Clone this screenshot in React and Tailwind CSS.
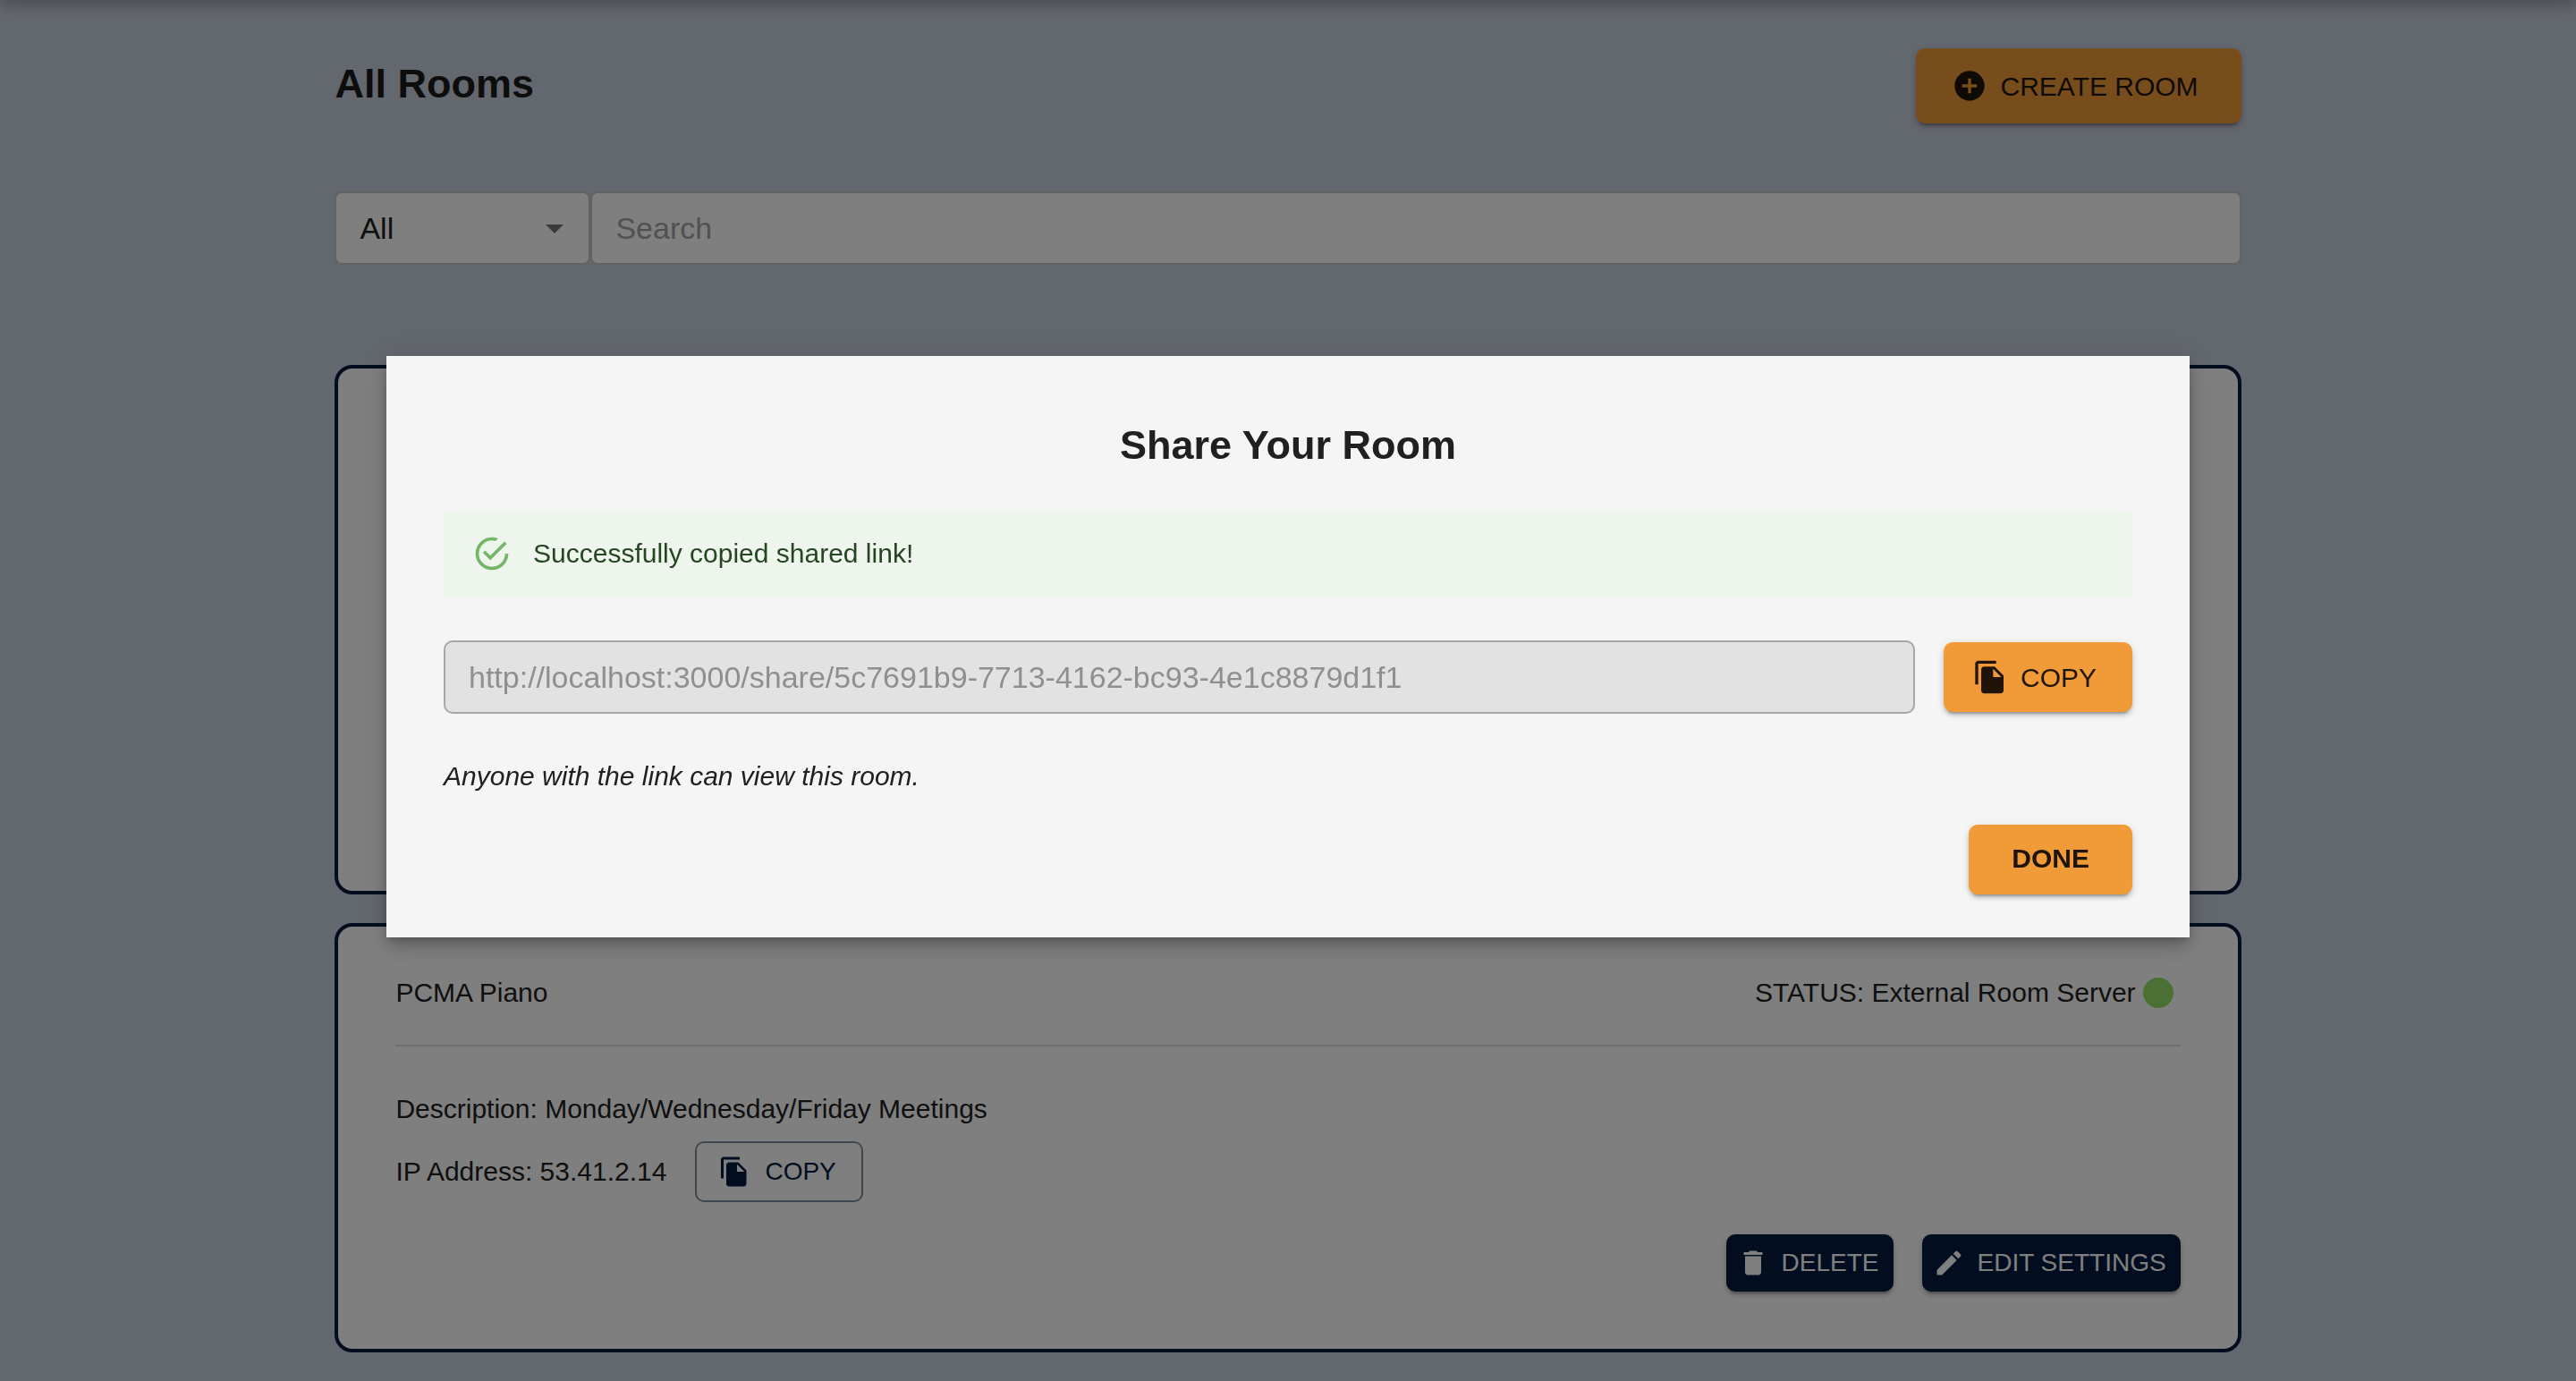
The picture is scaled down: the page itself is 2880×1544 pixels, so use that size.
import {
  MdAddCircle,
  MdArrowDropDown,
  MdDelete,
  MdEdit,
  MdFileCopy,
} from "react-icons/md";

const raised =
  "shadow-[0_6px_2px_-4px_rgba(0,0,0,0.2),0_4px_4px_0_rgba(0,0,0,0.14),0_2px_10px_0_rgba(0,0,0,0.12)]";

function SuccessIcon() {
  return (
    <svg viewBox="0 0 24 24" className="size-11 fill-[#74b568]" aria-hidden="true">
      <path d="M20,12A8,8 0 0,1 12,20A8,8 0 0,1 4,12A8,8 0 0,1 12,4C12.76,4 13.5,4.11 14.2,4.31L15.77,2.74C14.61,2.26 13.34,2 12,2A10,10 0 0,0 2,12A10,10 0 0,0 12,22A10,10 0 0,0 22,12M7.91,10.08L6.5,11.5L11,16L21,6L19.59,4.58L11,13.17L7.91,10.08Z" />
    </svg>
  );
}

function PrimaryButton({ icon: Icon, className = "", children }) {
  return (
    <button
      type="button"
      className={`flex shrink-0 items-center justify-center rounded-[10px] bg-[#f09b38] text-[30px] text-[#1f1407] ${raised} ${className}`}
    >
      {Icon && <Icon className="-ml-2 mr-3.5 size-10" aria-hidden="true" />}
      {children}
    </button>
  );
}

function NavyButton({ icon: Icon, children }) {
  return (
    <button
      type="button"
      className={`flex h-16 items-center rounded-[10px] bg-[#041c40] px-4 text-[28px] text-white ${raised}`}
    >
      <Icon className="-ml-1 mr-3.5 size-9" aria-hidden="true" />
      {children}
    </button>
  );
}

function RoomCard({ className = "", children }) {
  return (
    <article className={`rounded-[20px] border-4 border-[#041c40] bg-white px-16 ${className}`}>
      {children}
    </article>
  );
}

function RoomsPage() {
  return (
    <div className="min-h-screen overflow-hidden bg-[#c7cedd] pb-8">
      <header className="-mt-16 h-16 shadow-[0_8px_10px_0_rgba(0,0,0,0.14),0_2px_20px_0_rgba(0,0,0,0.12)]" />
      <main className="mx-auto w-[74%] pt-[54px]">
        <div className="flex items-center justify-between">
          <h1 className="pb-1 text-[45px] leading-[72px] font-bold text-[#1a1b1d]">All Rooms</h1>
          <PrimaryButton icon={MdAddCircle} className="h-[84px] px-12">
            CREATE ROOM
          </PrimaryButton>
        </div>

        <div className="mt-[76px] flex">
          <div className="relative w-[286px] shrink-0">
            <select
              aria-label="Filter rooms"
              className="h-[82px] w-full appearance-none rounded-lg border-2 border-[#c4c4c4] bg-white px-[26px] text-[34px] text-[#202020]"
            >
              <option>All</option>
            </select>
            <MdArrowDropDown
              className="pointer-events-none absolute inset-y-0 right-4 my-auto size-12 text-[#757575]"
              aria-hidden="true"
            />
          </div>
          <input
            type="text"
            aria-label="Search rooms"
            placeholder="Search"
            className="h-[82px] min-w-0 flex-1 rounded-lg border-2 border-[#c4c4c4] bg-white px-[26px] text-[34px] placeholder:text-[#a3a3a3]"
          />
        </div>

        <div className="mt-28 flex flex-col gap-8 text-[30px] leading-[48px] text-[#202020]">
          <RoomCard className="min-h-[592px]" />
          <RoomCard className="pt-[50px] pb-16">
            <div className="flex items-center justify-between border-b-2 border-[#e0e0e0] pb-[34px]">
              <h2>PCMA Piano</h2>
              <p className="mr-2 flex items-center gap-2">
                STATUS: External Room Server
                <span className="size-[34px] rounded-full bg-[#94e266]" />
              </p>
            </div>
            <p className="mt-[46px]">Description: Monday/Wednesday/Friday Meetings</p>
            <div className="mt-3 flex items-center gap-8">
              <p>IP Address: 53.41.2.14</p>
              <button
                type="button"
                className="flex h-[68px] items-center rounded-[10px] border-2 border-[#818d9f] px-7 text-[28px] text-[#041c40]"
              >
                <MdFileCopy className="-ml-1 mr-4 size-9" aria-hidden="true" />
                COPY
              </button>
            </div>
            <div className="mt-9 flex justify-end gap-8">
              <NavyButton icon={MdDelete}>DELETE</NavyButton>
              <NavyButton icon={MdEdit}>EDIT SETTINGS</NavyButton>
            </div>
          </RoomCard>
        </div>
      </main>
    </div>
  );
}

function ShareDialog() {
  return (
    <div className="fixed inset-0 flex items-center justify-center bg-black/50 pb-[98px]">
      <section
        role="dialog"
        aria-modal="true"
        aria-labelledby="share-title"
        className="w-[70%] bg-[#f5f5f5] px-16 pt-16 pb-12 text-[30px] text-[#202020] shadow-[0_6px_10px_-2px_rgba(0,0,0,0.2),0_12px_20px_0_rgba(0,0,0,0.14),0_2px_36px_0_rgba(0,0,0,0.12)]"
      >
        <h2 id="share-title" className="text-center text-[45px] leading-[72px] font-bold">
          Share Your Room
        </h2>
        <div
          role="alert"
          className="mt-9 flex items-center gap-6 rounded-lg bg-[#eef5ed] px-8 py-7 leading-[42px] text-[#264523]"
        >
          <span className="-my-px">
            <SuccessIcon />
          </span>
          <p>Successfully copied shared link!</p>
        </div>
        <div className="mt-12 flex items-center gap-8">
          <input
            type="text"
            aria-label="Share link"
            disabled
            readOnly
            value="http://localhost:3000/share/5c7691b9-7713-4162-bc93-4e1c8879d1f1"
            className="h-[82px] min-w-0 flex-1 rounded-[10px] border-2 border-[#a6a6a6] bg-[#e2e2e2] px-[26px] text-[34px] text-[#8f8f8f]"
          />
          <PrimaryButton icon={MdFileCopy} className="h-[78px] px-10">
            COPY
          </PrimaryButton>
        </div>
        <p className="mt-12 leading-[44px] italic">Anyone with the link can view this room.</p>
        <div className="mt-8 flex justify-end">
          <PrimaryButton className="h-[78px] px-12 pb-1 font-bold">DONE</PrimaryButton>
        </div>
      </section>
    </div>
  );
}

export default function App() {
  return (
    <div className='font-["Liberation_Sans",Helvetica,Arial,sans-serif]'>
      <RoomsPage />
      <ShareDialog />
    </div>
  );
}
